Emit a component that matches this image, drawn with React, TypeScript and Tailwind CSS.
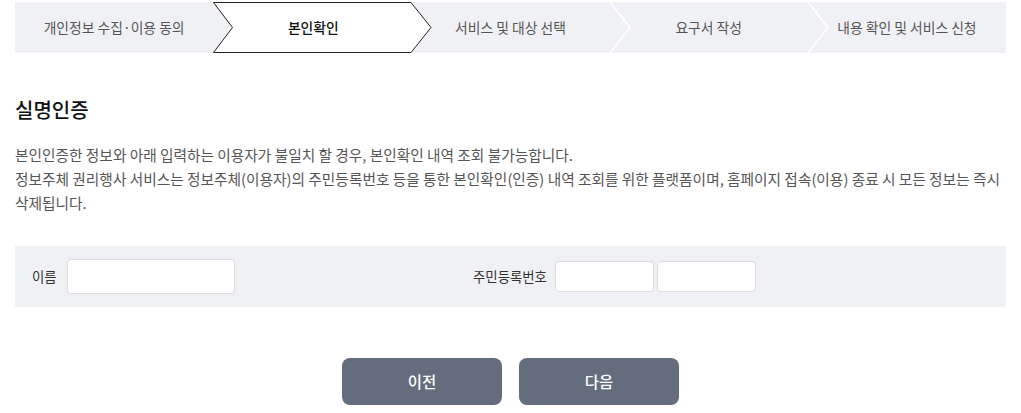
import React from "react";

const steps = [
  "개인정보 수집·이용 동의",
  "본인확인",
  "서비스 및 대상 선택",
  "요구서 작성",
  "내용 확인 및 서비스 신청",
];

export default function App() {
  return (
    <div
      className="w-[1021px] h-[413px] bg-white overflow-hidden"
      style={{ fontFamily: '"Noto Sans CJK KR", "Noto Sans", sans-serif' }}
    >
      {/* Stepper */}
      <div className="mx-[15px] mt-[2px] h-[51px] bg-[#f0f1f5] flex">
        {steps.map((s, i) => (
          <div key={i} className="relative flex-1 flex items-center justify-center">
            {i === 1 && (
              <svg
                className="absolute left-0 top-0 overflow-visible"
                width="220"
                height="51"
                viewBox="0 0 220 51"
              >
                <polygon
                  points="0.5,0.5 198,0.5 218,25.5 198,50.5 0.5,50.5 19.5,25.5"
                  fill="#ffffff"
                  stroke="#222222"
                  strokeWidth="1"
                />
              </svg>
            )}
            {(i === 3 || i === 4) && (
              <svg
                className="absolute left-0 top-0 overflow-visible"
                width="22"
                height="51"
                viewBox="0 0 22 51"
              >
                <polyline
                  points="0,0 20,25.5 0,51"
                  fill="none"
                  stroke="#ffffff"
                  strokeWidth="1.6"
                />
              </svg>
            )}
            <span
              className={
                "relative z-10 text-[13.8px] " +
                (i === 1 ? "text-[#111] font-medium pl-[2px]" : "text-[#555]")
              }
            >
              {s}
            </span>
          </div>
        ))}
      </div>

      {/* Title */}
      <h2 className="mx-[15px] mt-[44px] text-[20px] leading-[26px] font-medium text-[#111]">
        실명인증
      </h2>

      <div className="mx-[15px] mt-[20px] text-[14.7px] leading-[24px] text-[#555]">
        <p>본인인증한 정보와 아래 입력하는 이용자가 불일치 할 경우, 본인확인 내역 조회 불가능합니다.</p>
        <p>
          정보주체 권리행사 서비스는 정보주체(이용자)의 주민등록번호 등을 통한 본인확인(인증) 내역 조회를 위한 플랫폼이며,
          홈페이지 접속(이용) 종료 시 모든 정보는 즉시 삭제됩니다.
        </p>
      </div>

      {/* Form */}
      <div className="mx-[15px] mt-[31px] h-[61px] bg-[#f0f1f4] flex items-center">
        <div className="w-[458px] pl-[17px] flex items-center">
          <label className="w-[35px] text-[13.4px] text-[#333]">이름</label>
          <input className="w-[168px] h-[35px] bg-white border border-[#dcdde0] rounded-[4px] outline-none" />
        </div>
        <div className="flex items-center">
          <label className="w-[82px] text-[13.4px] text-[#333]">주민등록번호</label>
          <input className="w-[99px] h-[31px] bg-white border border-[#dcdde0] rounded-[4px] outline-none" />
          <input className="ml-[3px] w-[99px] h-[31px] bg-white border border-[#dcdde0] rounded-[4px] outline-none" />
        </div>
      </div>

      {/* Buttons */}
      <div className="mt-[51px] flex justify-center gap-[17px]">
        <button className="w-[160px] h-[47px] rounded-[8px] bg-[#636d7e] text-white text-[15.5px] font-medium">
          이전
        </button>
        <button className="w-[160px] h-[47px] rounded-[8px] bg-[#636d7e] text-white text-[15.5px] font-medium">
          다음
        </button>
      </div>
    </div>
  );
}
